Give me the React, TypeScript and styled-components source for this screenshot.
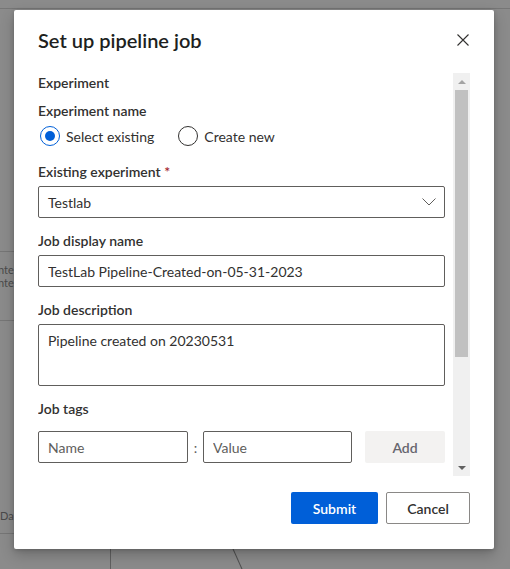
import React, { useState } from 'react';
import styled, { createGlobalStyle } from 'styled-components';

const GlobalStyle = createGlobalStyle`
  body {
    margin: 0;
    background: #8b8b8b;
    font-family: Lato, "Segoe UI", "Liberation Sans", sans-serif;
  }
`;

const SelectedRadio = ({ on }: { on: boolean }) => <RadioCircle $on={on} />;

const App = () => {
  const [mode, setMode] = useState<'existing' | 'new'>('existing');

  return (
    <Page>
      <GlobalStyle />
      {/* dimmed canvas behind the dialog */}
      <Canvas>
        <CanvasLine style={{ left: 0, top: 8, width: 510 }} />
        <CanvasLine style={{ left: 0, top: 251, width: 14 }} />
        <CanvasText style={{ left: -2, top: 264 }}>nte</CanvasText>
        <CanvasText style={{ left: -2, top: 277 }}>nte</CanvasText>
        <CanvasLine style={{ left: 0, top: 320, width: 14 }} />
        <CanvasText style={{ left: 0, top: 510 }}>Da</CanvasText>
        <CanvasLine style={{ left: 0, top: 533, width: 14 }} />
        <CanvasVLine style={{ left: 110, top: 549, height: 20 }} />
        <CanvasDiag />
      </Canvas>

      <Dialog>
        <Header>
          <Title>Set up pipeline job</Title>
          <CloseBtn aria-label="Close">
            <svg width="12" height="12" viewBox="0 0 12 12">
              <path d="M0.5 0.5 L11.5 11.5 M11.5 0.5 L0.5 11.5" stroke="#323130" strokeWidth="1.1" />
            </svg>
          </CloseBtn>
        </Header>

        <Body>
          <Content>
            <SectionTitle>Experiment</SectionTitle>
            <Field $gap={5}>
              <Label>Experiment name</Label>
              <RadioRow>
                <RadioOption onClick={() => setMode('existing')}>
                  <SelectedRadio on={mode === 'existing'} />
                  Select existing
                </RadioOption>
                <RadioOption onClick={() => setMode('new')}>
                  <SelectedRadio on={mode === 'new'} />
                  Create new
                </RadioOption>
              </RadioRow>
            </Field>

            <Field $top={3}>
              <Label>
                Existing experiment <Required>*</Required>
              </Label>
              <Dropdown>
                <span>Testlab</span>
                <svg width="14" height="8" viewBox="0 0 14 8">
                  <path d="M0.5 0.5 L7 7 L13.5 0.5" fill="none" stroke="#605e5c" strokeWidth="1" />
                </svg>
              </Dropdown>
            </Field>

            <Field>
              <Label>Job display name</Label>
              <TextBox defaultValue="TestLab Pipeline-Created-on-05-31-2023" />
            </Field>

            <Field>
              <Label>Job description</Label>
              <TextArea defaultValue="Pipeline created on 20230531" />
            </Field>

            <Field $gap={12}>
              <Label>Job tags</Label>
              <TagRow>
                <TagInput $w={150} placeholder="Name" />
                <Colon>:</Colon>
                <TagInput $w={149} placeholder="Value" />
                <AddButton>Add</AddButton>
              </TagRow>
            </Field>
          </Content>

          <ScrollBar>
            <ScrollArrow $dir="up" />
            <ScrollTrack>
              <ScrollThumb />
            </ScrollTrack>
            <ScrollArrow $dir="down" />
          </ScrollBar>
        </Body>

        <Footer>
          <PrimaryButton>Submit</PrimaryButton>
          <DefaultButton>Cancel</DefaultButton>
        </Footer>
      </Dialog>
    </Page>
  );
};

const Page = styled.div`
  position: relative;
  width: 510px;
  height: 569px;
  overflow: hidden;
  background: #8b8b8b;
`;

const Canvas = styled.div`
  position: absolute;
  inset: 0;
  overflow: hidden;
`;

const CanvasLine = styled.div`
  position: absolute;
  height: 1px;
  background: #767676;
`;

const CanvasVLine = styled.div`
  position: absolute;
  width: 1px;
  background: #606060;
`;

const CanvasDiag = styled.div`
  position: absolute;
  left: 237px;
  top: 547px;
  width: 1px;
  height: 24px;
  background: #505050;
  transform: rotate(-24deg);
`;

const CanvasText = styled.div`
  position: absolute;
  font-size: 11px;
  line-height: 12px;
  color: #4a4a4a;
`;

const Dialog = styled.div`
  position: absolute;
  left: 14px;
  top: 10px;
  width: 480px;
  height: 539px;
  box-sizing: border-box;
  background: #fff;
  border-radius: 2px;
  box-shadow: 0 6px 14px rgba(0, 0, 0, 0.22), 0 1px 4px rgba(0, 0, 0, 0.18);
  padding: 16px 24px 25px 24px;
  display: flex;
  flex-direction: column;
  color: #323130;
`;

const Header = styled.div`
  display: flex;
  align-items: center;
  justify-content: space-between;
  height: 28px;
  margin-bottom: 19px;
`;

const Title = styled.h1`
  margin: 0;
  font-size: 20px;
  line-height: 28px;
  font-weight: 600;
  color: #201f1e;
`;

const CloseBtn = styled.button`
  border: none;
  background: none;
  padding: 0;
  width: 24px;
  height: 24px;
  margin-right: -5px;
  display: flex;
  align-items: center;
  justify-content: center;
`;

const Body = styled.div`
  display: flex;
  gap: 8px;
  height: 403px;
`;

const Content = styled.div`
  width: 407px;
  overflow: hidden;
  display: flex;
  flex-direction: column;
  gap: 13px;
`;

const SectionTitle = styled.div`
  font-size: 14px;
  line-height: 20px;
  font-weight: 600;
  margin-bottom: -5px;
`;

const Field = styled.div<{ $gap?: number; $top?: number }>`
  display: flex;
  flex-direction: column;
  gap: ${(p) => p.$gap ?? 4}px;
  margin-top: ${(p) => p.$top ?? 0}px;
  flex-shrink: 0;
`;

const Label = styled.label`
  font-size: 14px;
  line-height: 20px;
  font-weight: 600;
  color: #323130;
`;

const Required = styled.span`
  color: #a4262c;
`;

const RadioRow = styled.div`
  display: flex;
  gap: 24px;
  height: 20px;
  padding-left: 2px;
`;

const RadioOption = styled.div`
  display: flex;
  align-items: center;
  gap: 6px;
  font-size: 14px;
  cursor: pointer;
`;

const RadioCircle = styled.span<{ $on: boolean }>`
  width: 20px;
  height: 20px;
  box-sizing: border-box;
  border-radius: 50%;
  border: 1px solid ${(p) => (p.$on ? '#005fd8' : '#323130')};
  display: flex;
  align-items: center;
  justify-content: center;
  &::after {
    content: '';
    width: 10px;
    height: 10px;
    border-radius: 50%;
    background: ${(p) => (p.$on ? '#005fd8' : 'transparent')};
  }
`;

const controlBase = `
  box-sizing: border-box;
  width: 100%;
  border: 1px solid #605e5c;
  border-radius: 2px;
  font-family: inherit;
  font-size: 14px;
  color: #323130;
  background: #fff;
`;

const Dropdown = styled.div`
  ${controlBase}
  height: 32px;
  padding: 0 8px 0 9px;
  display: flex;
  align-items: center;
  justify-content: space-between;
`;

const TextBox = styled.input`
  ${controlBase}
  height: 32px;
  padding: 0 9px;
  outline: none;
`;

const TextArea = styled.textarea`
  ${controlBase}
  height: 62px;
  padding: 6px 9px;
  resize: none;
  outline: none;
  line-height: 20px;
`;

const TagRow = styled.div`
  display: flex;
  align-items: center;
  height: 32px;
`;

const TagInput = styled.input<{ $w: number }>`
  ${controlBase}
  width: ${(p) => p.$w}px;
  height: 32px;
  padding: 0 9px;
  outline: none;
  &::placeholder {
    color: #605e5c;
  }
`;

const Colon = styled.span`
  width: 15px;
  text-align: center;
  font-size: 14px;
  color: #605e5c;
`;

const AddButton = styled.button`
  margin-left: 13px;
  width: 80px;
  height: 32px;
  border: none;
  border-radius: 2px;
  background: #f3f2f1;
  color: #66666e;
  font-family: inherit;
  font-size: 14px;
  font-weight: 600;
`;

const ScrollBar = styled.div`
  width: 17px;
  background: #f0f0f0;
  display: flex;
  flex-direction: column;
  align-items: center;
`;

const ScrollArrow = styled.div<{ $dir: 'up' | 'down' }>`
  height: 17px;
  width: 17px;
  display: flex;
  align-items: center;
  justify-content: center;
  &::after {
    content: '';
    border-left: 4px solid transparent;
    border-right: 4px solid transparent;
    ${(p) =>
      p.$dir === 'up' ? 'border-bottom: 4px solid #a3a3a3;' : 'border-top: 4px solid #606060;'}
  }
`;

const ScrollTrack = styled.div`
  flex: 1;
  width: 13px;
`;

const ScrollThumb = styled.div`
  height: 267px;
  background: #c1c1c1;
`;

const Footer = styled.div`
  margin-top: auto;
  display: flex;
  justify-content: flex-end;
  gap: 8px;
`;

const buttonBase = `
  height: 32px;
  border-radius: 2px;
  font-family: inherit;
  font-size: 14px;
  font-weight: 600;
  box-sizing: border-box;
  cursor: pointer;
`;

const PrimaryButton = styled.button`
  ${buttonBase}
  width: 87px;
  border: none;
  background: #005fd8;
  color: #fff;
`;

const DefaultButton = styled.button`
  ${buttonBase}
  width: 84px;
  border: 1px solid #8a8886;
  background: #fff;
  color: #323130;
`;

export default App;
